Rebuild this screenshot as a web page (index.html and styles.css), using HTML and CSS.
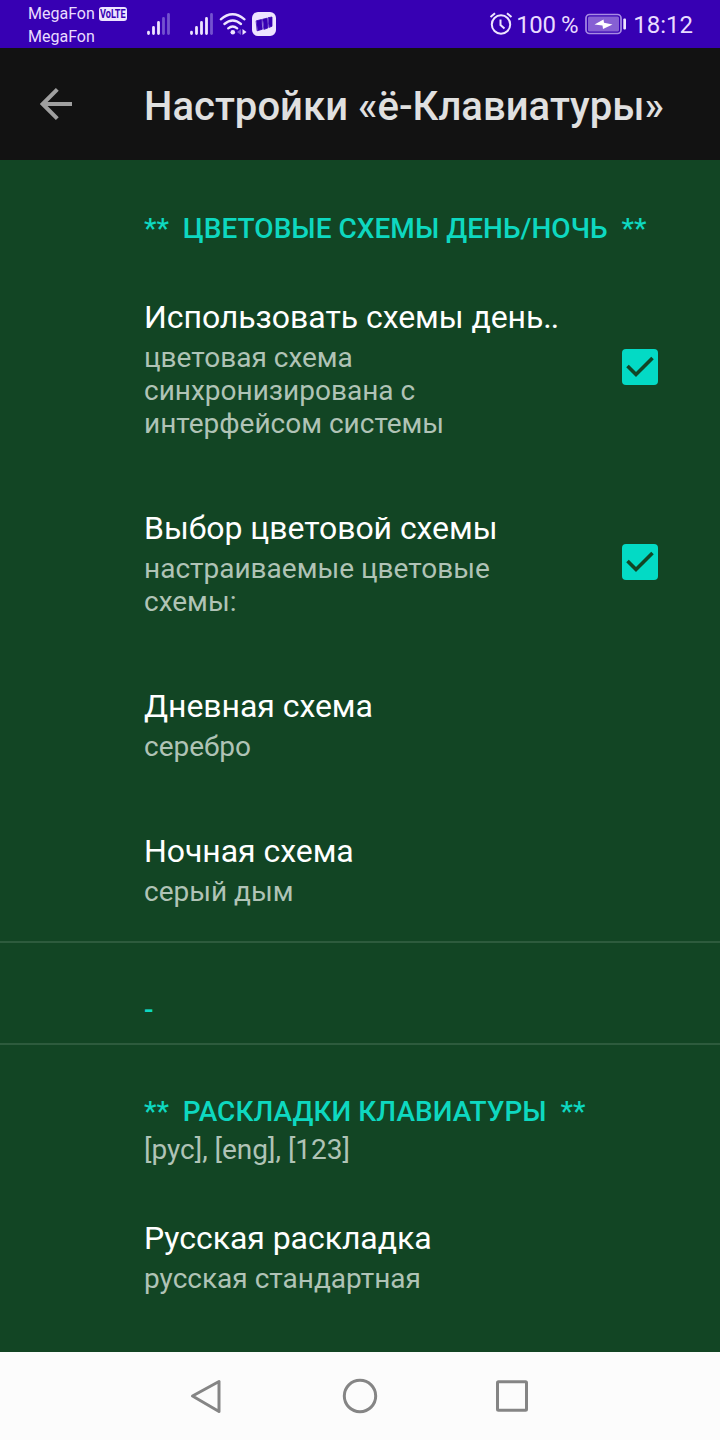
FILE: index.html
```html
<!DOCTYPE html>
<html lang="ru">
<head>
<meta charset="utf-8">
<title>Настройки «ё-Клавиатуры»</title>
<link rel="stylesheet" href="styles.css">
</head>
<body>
<div class="screen">
  <header class="status">
    <div class="carriers">
      <div class="carrier"><span class="carrier-name">MegaFon</span><span class="volte"><span class="volte-text">VoLTE</span></span></div>
      <div class="carrier"><span class="carrier-name">MegaFon</span></div>
    </div>
    <svg class="signals" width="136" height="48" viewBox="140 0 136 48" fill="none" stroke="#eee4ff" stroke-width="2.8" stroke-linecap="round">
      <path d="M148.5 32.2v1.3M153.5 27.500v6M158.500 22.500v11"/>
      <path d="M163.500 18.500v15M168.500 14.500v19" stroke="#7452cf"/>
      <path d="M191.500 32.200v1.300M196.500 27.500v6M201.500 22.500v11M206.500 18.500v15"/>
      <path d="M211.500 14.500v19" stroke="#7452cf"/>
      <path d="M220.800 19.300q11.700-10 23.700 0M224.400 24q8.300-7 16.600 0M228.200 28.300q4.500-3.600 9 0" stroke-width="2.3"/>
      <circle cx="232.800" cy="32.300" r="2.300" fill="#eee4ff" stroke="none"/>
      <path d="M241 29v6l-4-3z" fill="#7452cf" stroke="none"/>
      <path d="M242.500 29v6l4-3z" fill="#eee4ff" stroke="none"/>
      <rect x="252" y="12" width="24" height="24" rx="6" fill="#eee4ff" stroke="none"/>
      <path d="M256.500 20.800l5-1.300.8 9.800-4.800 1.400zM262.800 19.200l4.200-1 .8 9.800-3.600 1.300zM268.300 17.700l3.700-.7v9.300l-2.700 1z" fill="#3700b3" stroke="#3700b3" stroke-width=".8" stroke-linejoin="round"/>
    </svg>
    <div class="status-right">
      <svg class="alarm" width="24" height="26" viewBox="489 11 24 26" fill="none" stroke="#eee4ff" stroke-width="2">
        <circle cx="501" cy="24.500" r="9.200"/>
        <path d="M490.500 17l4.500-3.700M511.500 17l-4.500-3.700M500.500 19.500v5.500l4 3.500"/>
      </svg>
      <span class="percent">100 %</span>
      <svg class="battery" width="42" height="22" viewBox="585 13 42 22">
        <rect x="586" y="14.500" width="35" height="19" rx="3.500" fill="none" stroke="#a78be3" stroke-width="1.700"/>
        <rect x="588" y="16.500" width="31" height="15" rx="1.500" fill="#8660d3"/>
        <path d="M594.500 24.500l9-5 .5 3.300 8.500 1.700-9.500 4.500-.5-3.500z" fill="#fff"/>
        <rect x="623.300" y="18.500" width="2.700" height="11" rx="1" fill="#eee4ff"/>
      </svg>
      <span class="clock">18:12</span>
    </div>
  </header>
  <div class="appbar">
    <svg class="back" width="32" height="32" viewBox="0 0 32 32" fill="none" stroke="#a0a0a0" stroke-width="4"><path d="M32 16H3M17.300 1.400L2.700 16l14.600 14.600"/></svg>
    <h1 class="title">Настройки «ё-Клавиатуры»</h1>
  </div>
  <main class="settings">
    <section class="heading"><h2 class="heading-text">**  ЦВЕТОВЫЕ СХЕМЫ ДЕНЬ/НОЧЬ  **</h2></section>
    <div class="item">
      <div class="texts">
        <div class="name">Использовать схемы день<span class="dots">..</span></div>
        <div class="summary">цветовая схема<br>синхронизирована с<br>интерфейсом системы</div>
      </div>
      <svg class="check" width="36" height="36" viewBox="0 0 36 36"><rect width="36" height="36" rx="4" fill="#03dac5"/><path d="M5.500 17l8.500 8.500L30.500 9" fill="none" stroke="#124525" stroke-width="3.600"/></svg>
    </div>
    <div class="item">
      <div class="texts">
        <div class="name">Выбор цветовой схемы</div>
        <div class="summary">настраиваемые цветовые<br>схемы:</div>
      </div>
      <svg class="check" width="36" height="36" viewBox="0 0 36 36"><rect width="36" height="36" rx="4" fill="#03dac5"/><path d="M5.500 17l8.500 8.500L30.500 9" fill="none" stroke="#124525" stroke-width="3.600"/></svg>
    </div>
    <div class="item"><div class="texts"><div class="name">Дневная схема</div><div class="summary">серебро</div></div></div>
    <div class="item"><div class="texts"><div class="name">Ночная схема</div><div class="summary">серый дым</div></div></div>
    <section class="heading divided"><h2 class="heading-text">-</h2></section>
    <section class="heading divided">
      <h2 class="heading-text">**  РАСКЛАДКИ КЛАВИАТУРЫ  **</h2>
      <div class="summary">[рус], [eng], [123]</div>
    </section>
    <div class="item"><div class="texts"><div class="name">Русская раскладка</div><div class="summary">русская стандартная</div></div></div>
  </main>
  <nav class="navbar">
    <svg width="40" height="40" viewBox="0 0 40 40"><path d="M31 5.500v30L4.500 20z"/></svg>
    <svg width="40" height="40" viewBox="0 0 40 40"><circle cx="20" cy="20" r="15.700"/></svg>
    <svg width="40" height="40" viewBox="0 0 40 40"><rect x="5.500" y="5.800" width="29" height="28.500" rx="1"/></svg>
  </nav>
</div>
</body>
</html>
```

FILE: styles.css
```css
* { box-sizing: border-box; }
body { margin: 0; font-family: Roboto, "Liberation Sans", sans-serif; }
.screen { width: 720px; height: 1440px; display: flex; flex-direction: column; background: #124524; overflow: hidden; }
svg { display: block; flex: none; }

.status { height: 48px; flex: none; display: flex; background: #3700b3; color: #e9dcff; white-space: nowrap; }
.carriers { width: 140px; padding: 2px 0 0 28px; }
.carrier { height: 23px; line-height: 23px; font-size: 16px; display: flex; align-items: center; gap: 4px; }
.volte { width: 28px; height: 14px; border-radius: 3px; background: #eee4ff; color: #3700b3; display: flex; align-items: center; justify-content: center; }
.volte-text { font-size: 12px; line-height: 14px; font-weight: 700; transform: scaleX(0.76); }
.status-right { margin-left: auto; padding-right: 27px; display: flex; align-items: center; font-size: 24px; padding-top: 1px; }
.alarm { margin-top: -1px; }
.percent { margin-left: 3px; letter-spacing: -0.4px; }
.battery { margin: -1px 0 0 7px; }
.clock { margin-left: 6px; }

.appbar { height: 112px; flex: none; display: flex; align-items: center; padding-left: 40px; background: #121212; }
.title { margin: 5px 0 0 72px; font-size: 40px; line-height: 47px; font-weight: 500; letter-spacing: 0.04px; color: #e0e0e0; white-space: nowrap; }

.settings { flex: 1; }
.heading { min-height: 102px; padding: 52px 0 17px 144px; }
.divided { border-top: 2px solid #2d5b3d; padding-top: 50px; }
.heading-text { margin: 0; font-size: 28px; line-height: 33px; font-weight: 500; letter-spacing: 0.03px; color: #0ed8c0; white-space: pre; }
.heading .summary { margin-top: 5px; }
.item { display: flex; align-items: center; padding: 0 62px 0 144px; }
.texts { flex: 1; padding: 36px 0 33px; }
.check { margin-bottom: 1px; }
.name { font-size: 32px; line-height: 38px; letter-spacing: -0.05px; color: #fff; white-space: nowrap; }
.dots { letter-spacing: -1px; }
.summary { margin-top: 5px; font-size: 28px; line-height: 33px; color: #b0c3b6; white-space: nowrap; }

.navbar { height: 88px; flex: none; display: flex; justify-content: center; align-items: center; gap: 112px; background: #fcfcfc; }
.navbar svg { fill: none; stroke: #858585; stroke-width: 3; stroke-linejoin: round; }
```
